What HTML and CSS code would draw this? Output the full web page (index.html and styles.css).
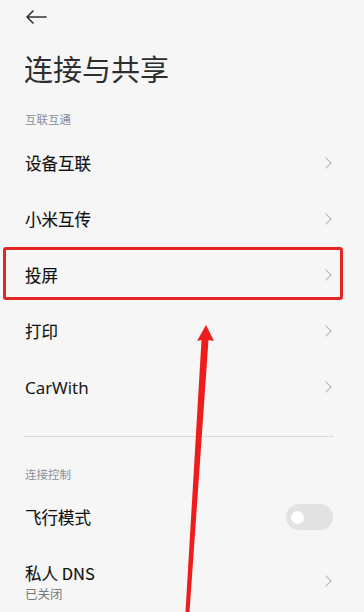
FILE: index.html
```
<!DOCTYPE html>
<html lang="zh">
<head>
<meta charset="utf-8">
<link rel="stylesheet" href="styles.css">
</head>
<body>
<div class="page">
  <div class="topbar">
    <svg class="back" width="22" height="14" viewBox="0 0 22 14"><path d="M21 7H2M8 1L2 7l6 6" fill="none" stroke="#333" stroke-width="1.6" stroke-linecap="round" stroke-linejoin="round"/></svg>
  </div>
  <h1 class="title">连接与共享</h1>

  <div class="section-label first">互联互通</div>
  <div class="row"><span class="label">设备互联</span><span class="chev"></span></div>
  <div class="row"><span class="label">小米互传</span><span class="chev"></span></div>
  <div class="row highlighted"><span class="label">投屏</span><span class="chev"></span><span class="redbox"></span></div>
  <div class="row"><span class="label">打印</span><span class="chev"></span></div>
  <div class="row"><span class="label latin">CarWith</span><span class="chev"></span></div>
  <div class="divider"></div>

  <div class="section-label second">连接控制</div>
  <div class="row"><span class="label">飞行模式</span><span class="toggle"><span class="knob"></span></span></div>
  <div class="row tall">
    <div class="stack"><span class="label">私人 DNS</span><span class="sub">已关闭</span></div>
    <span class="chev"></span>
  </div>

  <svg class="arrow" width="364" height="612" viewBox="0 0 364 612">
    <polygon points="206,325 214,341 208.5,340 189.5,612 185.5,612 201.5,340 197,341" fill="#ee1c1c"/>
  </svg>
</div>
</body>
</html>
```
FILE: styles.css
```
* { box-sizing: border-box; }
html, body { margin: 0; padding: 0; }
body {
  background: #f6f6f6;
  font-family: "Noto Sans CJK SC", "Noto Sans", sans-serif;
  color: #111;
  width: 364px;
  height: 612px;
  overflow: hidden;
}
.page {
  position: relative;
  width: 364px;
  height: 612px;
  overflow: hidden;
}
.topbar {
  height: 34px;
  padding: 10px 0 0 25px;
}
.back { display: block; }
.title {
  margin: 0;
  padding: 0 0 0 24px;
  font-size: 29px;
  font-weight: 400;
  color: #2e2e2e;
  line-height: 68px;
  height: 68px;
}
.section-label {
  padding-left: 25px;
  font-size: 11.5px;
  color: #8a8e9c;
  height: 30px;
  line-height: 30px;
}
.section-label.first { height: 33px; line-height: 34px; }
.section-label.second { margin-top: 22px; }
.row {
  position: relative;
  height: 56px;
  display: flex;
  align-items: center;
  justify-content: space-between;
  padding: 0 31px 0 25px;
}
.label {
  font-size: 16.5px;
  font-weight: 400;
  color: #111;
  -webkit-text-stroke: 0.15px #111;
}
.latin { font-family: "Open Sans", "Noto Sans", sans-serif; font-size: 17px; -webkit-text-stroke: 0.1px #111; }
.chev {
  width: 8px;
  height: 8px;
  border-top: 1.3px solid #b5b5b5;
  border-right: 1.3px solid #b5b5b5;
  transform: rotate(45deg);
  margin-right: 3px;
}
.redbox {
  position: absolute;
  left: 3px;
  top: 0;
  width: 340px;
  height: 53px;
  border: 3px solid #e32525;
  border-radius: 3px;
}
.divider {
  height: 1px;
  background: #dcdcdc;
  margin: 21px 30px 0 24px;
}
.toggle {
  width: 47px;
  height: 26px;
  border-radius: 13px;
  background: #e2e2e2;
  display: flex;
  align-items: center;
  padding-left: 5px;
}
.knob {
  width: 13px;
  height: 13px;
  border-radius: 50%;
  background: #fff;
}
.row.tall { height: 66px; padding-top: 15px; align-items: flex-start; }
.row.tall .chev { margin-top: 17px; }
.stack { display: flex; flex-direction: column; }
.stack .label { line-height: 26px; }
.sub {
  font-size: 12.5px;
  color: #777;
  line-height: 16px;
}
.arrow {
  position: absolute;
  left: 0;
  top: 0;
  pointer-events: none;
}
```
